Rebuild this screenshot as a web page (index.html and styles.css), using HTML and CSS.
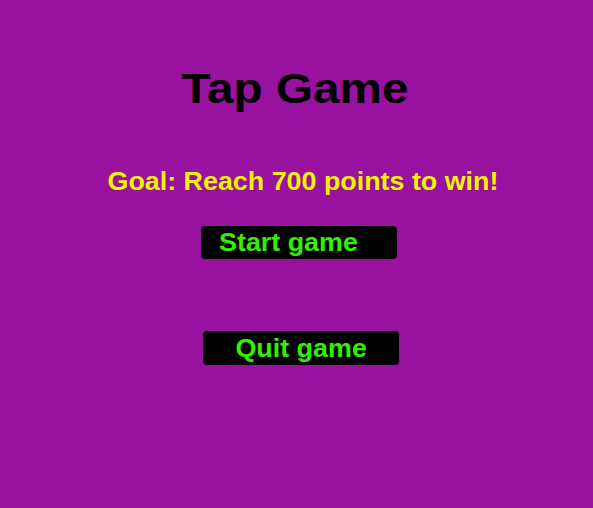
FILE: index.html
```html
<!DOCTYPE html>
<html lang="en">
<head>
    <meta charset="UTF-8">
    <meta name="viewport" content="width=device-width, initial-scale=1.0">
    <title>Tap Game</title>
    <link rel="stylesheet" href="styles.css">
</head>
<body>
    <div class="screen">
        <h1 class="title"><span>Tap Game</span></h1>
        <p class="goal"><span>Goal: Reach 700 points to win!</span></p>
        <button class="button start"><span>Start game</span></button>
        <button class="button quit"><span>Quit game</span></button>
    </div>
</body>
</html>
```

FILE: styles.css
```css
body {
    font-family: "Liberation Sans", Arial, sans-serif;
    font-weight: bold;
    margin: 0;
    padding: 0;
    background-color: #99119f;
}
.screen {
    height: 508px;
    display: flex;
    flex-direction: column;
    align-items: center;
    padding-top: 68px;
    box-sizing: border-box;
}
.title {
    margin: 0 0 0 -3px;
    font-size: 42px;
    line-height: 42px;
    color: #000;
}
.title span {
    display: inline-block;
    transform: scaleX(1.135);
}
.goal {
    margin: 59px 0 0 12px;
    font-size: 25px;
    line-height: 25px;
    color: #f2f200;
}
.goal span {
    display: inline-block;
    transform: scaleX(1.074);
}
.button {
    width: 196px;
    border: none;
    border-radius: 4px;
    background-color: #000;
    color: #32f000;
    font-family: inherit;
    font-weight: bold;
    font-size: 25px;
    padding: 0;
    cursor: pointer;
}
.button span {
    display: inline-block;
    transform: scaleX(1.075);
}
.start {
    height: 33px;
    line-height: 33px;
    margin: 32px 0 0 5px;
    text-align: left;
    padding-left: 18px;
}
.start span {
    transform-origin: left center;
}
.quit {
    height: 34px;
    line-height: 34px;
    margin: 72px 0 0 9px;
    text-align: center;
}
```
